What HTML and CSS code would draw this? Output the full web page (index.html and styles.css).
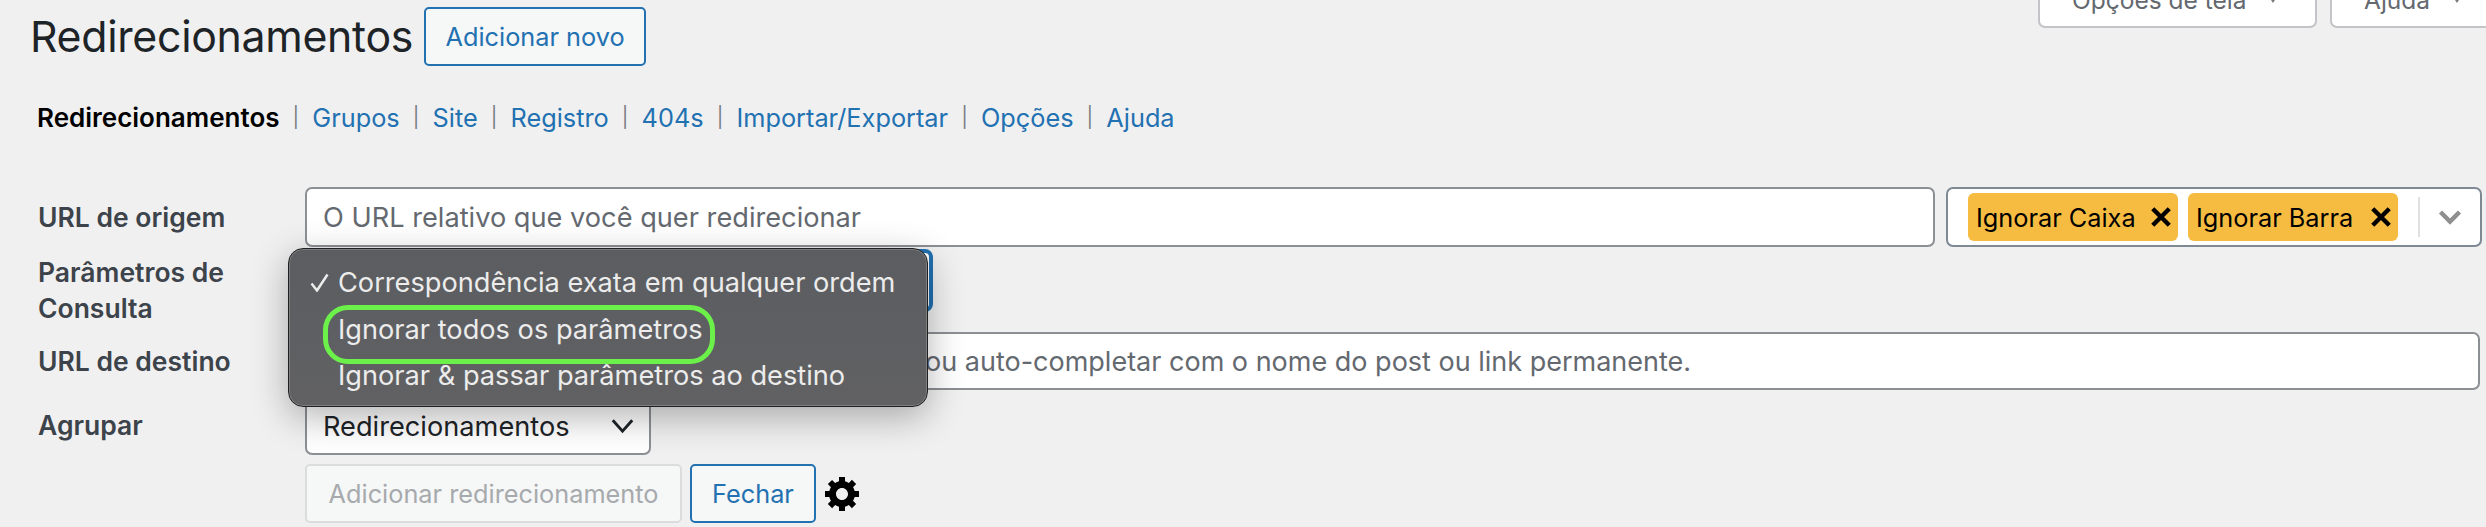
FILE: index.html
```html
<!DOCTYPE html>
<html lang="pt-BR">
<head>
<meta charset="utf-8">
<title>Redirecionamentos</title>
<link rel="stylesheet" href="styles.css">
</head>
<body>
<div class="screen-meta">
  <button class="meta-btn meta-options">Opções de tela <span class="meta-arrow"></span></button>
  <button class="meta-btn meta-help">Ajuda <span class="meta-arrow"></span></button>
</div>
<header class="page-head">
  <h1>Redirecionamentos</h1>
  <a class="btn btn-outline btn-new">Adicionar novo</a>
</header>
<nav class="subnav">
  <strong>Redirecionamentos</strong><i>|</i><a>Grupos</a><i>|</i><a>Site</a><i>|</i><a>Registro</a><i>|</i><a>404s</a><i>|</i><a>Importar/Exportar</a><i>|</i><a>Opções</a><i>|</i><a>Ajuda</a>
</nav>
<form class="form">
  <div class="row row-source">
    <label class="label">URL de origem</label>
    <div class="controls">
      <div class="field field-source">O URL relativo que você quer redirecionar</div>
      <div class="multi">
        <div class="tags">
          <span class="tag">Ignorar Caixa <svg class="tag-x" viewBox="0 0 20 20"><path d="M2.500 2.500 17.500 17.500M17.500 2.500 2.500 17.500"/></svg></span>
          <span class="tag">Ignorar Barra <svg class="tag-x" viewBox="0 0 20 20"><path d="M2.500 2.500 17.500 17.500M17.500 2.500 2.500 17.500"/></svg></span>
        </div>
        <span class="multi-sep"></span>
        <svg class="multi-chev" viewBox="0 0 24 16"><path d="M2.500 3 12 12.500 21.500 3"/></svg>
      </div>
    </div>
  </div>
  <div class="row row-query">
    <label class="label label-query">Parâmetros de Consulta</label>
    <div class="select-wrap">
      <div class="select-focus"></div>
      <ul class="menu">
        <li class="menu-item"><svg class="check" viewBox="0 0 19 19"><path d="M1.500 10.500 7 17.500 17.500 1.500"/></svg>Correspondência exata em qualquer ordem</li>
        <li class="menu-item"><span class="ring">Ignorar todos os parâmetros</span></li>
        <li class="menu-item">Ignorar &amp; passar parâmetros ao destino</li>
      </ul>
    </div>
  </div>
  <div class="row row-target">
    <label class="label">URL de destino</label>
    <div class="field field-target"><span class="field-hidden">O URL de destino para redirecionar </span>ou auto-completar com o nome do post ou link permanente.</div>
  </div>
  <div class="row row-group">
    <label class="label label-group">Agrupar</label>
    <div class="select-group">Redirecionamentos <svg class="select-chev" viewBox="0 0 20 14"><path d="M1.500 2 10 11.500 18.500 2"/></svg></div>
  </div>
  <div class="row row-actions">
    <span class="label"></span>
    <div class="actions">
      <button type="button" class="btn btn-disabled">Adicionar redirecionamento</button>
      <button type="button" class="btn btn-outline btn-close">Fechar</button>
      <svg class="gear" viewBox="1 2 17 17"><path fill-rule="evenodd" d="M18 12h-2.180c-.17.7-.44 1.350-.81 1.930l1.540 1.540-2.100 2.100-1.540-1.540c-.58.36-1.230.63-1.910.79V19H8v-2.180c-.68-.16-1.330-.43-1.910-.79l-1.540 1.540-2.120-2.120 1.540-1.540c-.36-.58-.63-1.230-.79-1.910H1V9.030h2.170c.16-.7.44-1.350.8-1.940L2.430 5.550l2.100-2.100 1.540 1.540c.58-.37 1.240-.64 1.930-.81V2h3v2.180c.68.16 1.330.43 1.910.79l1.540-1.540 2.120 2.120-1.540 1.540c.36.59.64 1.240.8 1.940H18V12zm-8.500 1.500c1.660 0 3-1.340 3-3s-1.340-3-3-3-3 1.340-3 3 1.340 3 3 3z"/></svg>
    </div>
  </div>
</form>
</body>
</html>
```
FILE: styles.css
```css
* { box-sizing: border-box; }
html, body { height: 100%; overflow: hidden; }
body {
  margin: 0;
  background: #f0f0f1;
  color: #1d2327;
  font-family: Inter, "Liberation Sans", sans-serif;
  font-size: 27.200px;
  position: relative;
}
.screen-meta {
  display: flex;
  justify-content: flex-end;
  gap: 13px;
  height: 0;
}
.meta-btn {
  height: 60px;
  margin-top: -32px;
  background: #fff;
  border: 2px solid #c3c4c7;
  border-radius: 0 0 7px 7px;
  color: #646970;
  font: 24.500px Inter, sans-serif;
  padding: 3px 0 0 32px;
  display: flex;
  align-items: center;
  justify-content: flex-start;
  white-space: pre;
}
.meta-options { width: 279px; }
.meta-help { width: 166px; margin-right: -10px; }
.meta-arrow {
  width: 0; height: 0;
  margin-left: 16px;
  border: 4px solid transparent;
  border-top: 6px solid #787c82;
  border-bottom: 0;
}
.page-head {
  display: flex;
  align-items: flex-start;
  padding: 7px 0 0 30px;
  gap: 11px;
}
h1 {
  margin: 0;
  font-size: 42.800px;
  font-weight: 400;
  line-height: 59px;
  letter-spacing: -0.3px;
}
.btn {
  display: inline-flex;
  align-items: center;
  justify-content: center;
  height: 59px;
  padding: 0;
  border-radius: 5px;
  font: 25.300px Inter, sans-serif;
  background: #f6f7f7;
  white-space: nowrap;
}
.btn-outline {
  border: 2px solid #2271b1;
  color: #2271b1;
}
.btn-new { width: 222px; }
.subnav {
  display: flex;
  align-items: center;
  height: 32px;
  margin: 35px 0 0 37px;
  font-size: 25.300px;
  color: #2271b1;
}
.subnav strong { color: #000; font-weight: 600; font-size: 26px; }
.subnav i {
  color: #787c82;
  font-style: normal;
  font-size: 20px;
  font-weight: 400;
  padding: 0 13.100px;
}
.form { margin-top: 54px; padding-left: 38px; }
.row { display: flex; }
.label {
  flex: 0 0 267px;
  font-size: 26.500px;
  font-weight: 600;
  color: #3c434a;
  line-height: 36px;
  padding-right: 30px;
}
.field {
  height: 60px;
  background: #fff;
  border: 2px solid #8c8f94;
  border-radius: 7px;
  color: #646970;
  padding: 0 16px;
  display: flex;
  align-items: center;
  white-space: pre;
  overflow: hidden;
}
.row-source { height: 60px; align-items: center; }
.controls { flex: 0 0 2177px; display: flex; gap: 11px; }
.field-source { flex: 0 0 1630px; }
.multi {
  flex: 1;
  height: 60px;
  background: #fff;
  border: 2px solid #7e8993;
  border-radius: 7px;
  display: flex;
  align-items: center;
  padding-left: 20px;
}
.tags { display: flex; gap: 10px; }
.tag {
  display: flex;
  align-items: center;
  justify-content: space-between;
  width: 210px;
  height: 48px;
  padding: 0 6px 0 8px;
  background: #f6bc42;
  border-radius: 6px;
  color: #000;
  font-size: 25.300px;
}
.tag-x { width: 22px; height: 22px; fill: none; stroke: #000; stroke-width: 4; }
.multi-sep { width: 2px; height: 40px; background: #e0e0e0; margin-left: 20px; }
.multi-chev { width: 24px; height: 16px; margin-left: 18px; fill: none; stroke: #8f8f8f; stroke-width: 4.500; }
.row-query { margin-top: 2px; height: 83px; }
.label-query { margin-top: 5px; }
.select-wrap { position: relative; flex: 0 0 628px; }
.select-focus {
  height: 63px;
  border: 4px solid #2271b1;
  border-radius: 8px;
  background: #fff;
}
.menu {
  position: absolute;
  z-index: 5;
  left: -17px;
  top: -1px;
  width: 640px;
  height: 159px;
  margin: 0;
  padding: 11px 0 0 0;
  list-style: none;
  background: linear-gradient(#5b5d61, #616163);
  border: 1px solid #1f1f1f;
  border-radius: 15px;
  box-shadow: 0 0 0 1px rgba(255,255,255,.2) inset, 0 10px 36px rgba(0,0,0,.3);
  color: #ececec;
  font-size: 27.200px;
}
.menu-item { position: relative; height: 46.500px; line-height: 46.500px; padding-left: 49px; white-space: nowrap; }
.check {
  position: absolute;
  left: 21px;
  top: 13px;
  width: 19px;
  height: 19px;
  fill: none;
  stroke: #ececec;
  stroke-width: 2.500;
}
.ring {
  display: inline-block;
  position: relative;
}
.ring::after {
  content: "";
  position: absolute;
  left: -15px; right: -12px; top: -1.500px;
  height: 49px;
  border: 5px solid #6bf14a;
  border-radius: 25px;
}
.row-target { align-items: center; height: 58px; }
.field-target { flex: 0 0 2175px; height: 58px; font-size: 27px; }
.field-hidden { display: inline-block; width: 602px; overflow: hidden; }
.row-group { margin-top: 7px; height: 58px; align-items: center; }
.label-group { margin-bottom: 2px; }
.select-group {
  width: 346px;
  height: 58px;
  background: #fff;
  border: 2px solid #8c8f94;
  border-radius: 7px;
  padding: 0 16px;
  color: #1d2327;
  display: flex;
  align-items: center;
  justify-content: space-between;
}
.select-chev { width: 23px; height: 16px; fill: none; stroke: #1d2327; stroke-width: 2.500; margin-right: -1px; }
.row-actions { margin-top: 9px; }
.actions { display: flex; align-items: center; gap: 8px; }
.btn-disabled {
  width: 377px;
  border: 2px solid #dcdcde;
  color: #a7aaad;
}
.btn-close { width: 126px; }
.gear { width: 34px; height: 34px; margin-left: 1px; fill: #000; }
```
